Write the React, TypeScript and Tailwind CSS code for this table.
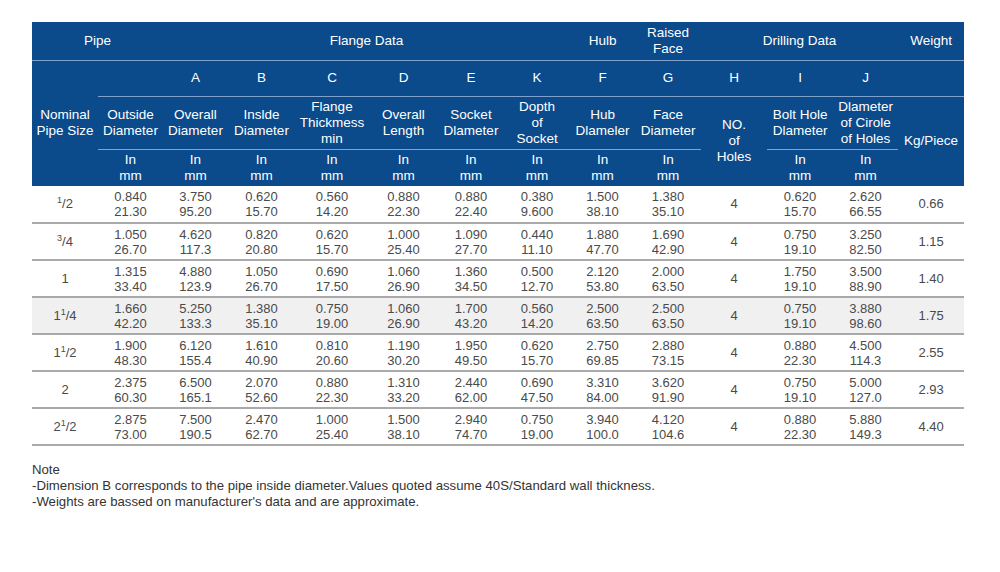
import React from "react";

type Pair = [string, string];

interface FlangeRow {
  whole: string;
  num?: string;
  den?: string;
  cells: Pair[];
  holes: string;
  drill: Pair[];
  weight: string;
  shaded?: boolean;
}

const ROWS: FlangeRow[] = [
  {
    whole: "",
    num: "1",
    den: "2",
    cells: [["0.840", "21.30"], ["3.750", "95.20"], ["0.620", "15.70"], ["0.560", "14.20"], ["0.880", "22.30"], ["0.880", "22.40"], ["0.380", "9.600"], ["1.500", "38.10"], ["1.380", "35.10"]],
    holes: "4",
    drill: [["0.620", "15.70"], ["2.620", "66.55"]],
    weight: "0.66",
  },
  {
    whole: "",
    num: "3",
    den: "4",
    cells: [["1.050", "26.70"], ["4.620", "117.3"], ["0.820", "20.80"], ["0.620", "15.70"], ["1.000", "25.40"], ["1.090", "27.70"], ["0.440", "11.10"], ["1.880", "47.70"], ["1.690", "42.90"]],
    holes: "4",
    drill: [["0.750", "19.10"], ["3.250", "82.50"]],
    weight: "1.15",
  },
  {
    whole: "1",
    cells: [["1.315", "33.40"], ["4.880", "123.9"], ["1.050", "26.70"], ["0.690", "17.50"], ["1.060", "26.90"], ["1.360", "34.50"], ["0.500", "12.70"], ["2.120", "53.80"], ["2.000", "63.50"]],
    holes: "4",
    drill: [["1.750", "19.10"], ["3.500", "88.90"]],
    weight: "1.40",
  },
  {
    whole: "1",
    num: "1",
    den: "4",
    cells: [["1.660", "42.20"], ["5.250", "133.3"], ["1.380", "35.10"], ["0.750", "19.00"], ["1.060", "26.90"], ["1.700", "43.20"], ["0.560", "14.20"], ["2.500", "63.50"], ["2.500", "63.50"]],
    holes: "4",
    drill: [["0.750", "19.10"], ["3.880", "98.60"]],
    weight: "1.75",
    shaded: true,
  },
  {
    whole: "1",
    num: "1",
    den: "2",
    cells: [["1.900", "48.30"], ["6.120", "155.4"], ["1.610", "40.90"], ["0.810", "20.60"], ["1.190", "30.20"], ["1.950", "49.50"], ["0.620", "15.70"], ["2.750", "69.85"], ["2.880", "73.15"]],
    holes: "4",
    drill: [["0.880", "22.30"], ["4.500", "114.3"]],
    weight: "2.55",
  },
  {
    whole: "2",
    cells: [["2.375", "60.30"], ["6.500", "165.1"], ["2.070", "52.60"], ["0.880", "22.30"], ["1.310", "33.20"], ["2.440", "62.00"], ["0.690", "47.50"], ["3.310", "84.00"], ["3.620", "91.90"]],
    holes: "4",
    drill: [["0.750", "19.10"], ["5.000", "127.0"]],
    weight: "2.93",
  },
  {
    whole: "2",
    num: "1",
    den: "2",
    cells: [["2.875", "73.00"], ["7.500", "190.5"], ["2.470", "62.70"], ["1.000", "25.40"], ["1.500", "38.10"], ["2.940", "74.70"], ["0.750", "19.00"], ["3.940", "100.0"], ["4.120", "104.6"]],
    holes: "4",
    drill: [["0.880", "22.30"], ["5.880", "149.3"]],
    weight: "4.40",
  },
];

const WIDTHS = [66, 65, 65, 67, 74, 69, 66, 66, 65, 66, 66, 66, 65, 66];

const line = "border-b border-[#7fa2cd]";

function PairCell({ pair }: { pair: Pair }) {
  return (
    <td className="p-0 text-center align-middle leading-[15px]">
      <div>{pair[0]}</div>
      <div>{pair[1]}</div>
    </td>
  );
}

function Units() {
  return (
    <td className="p-0 text-center align-middle leading-[16px]">
      <div>In</div>
      <div>mm</div>
    </td>
  );
}

function Size({ row }: { row: FlangeRow }) {
  return (
    <span>
      {row.whole}
      {row.num && (
        <>
          <sup className="text-[9px] relative -top-[5px]">{row.num}</sup>/{row.den}
        </>
      )}
    </span>
  );
}

export default function App() {
  const head = "p-0 text-center align-middle font-normal";
  return (
    <div
      className="min-h-[572px] w-[1000px] bg-white pl-[32px] pt-[22px]"
      style={{ fontFamily: '"Liberation Sans", Arial, sans-serif' }}
    >
      <table className="table-fixed border-collapse w-[932px] text-[13px]">
        <colgroup>
          {WIDTHS.map((w, i) => (
            <col key={i} style={{ width: w }} />
          ))}
        </colgroup>
        <thead className="bg-[#0b4a8b] text-white text-[13.5px]">
          <tr className="h-[38px]">
            <th colSpan={2} className={`${head} ${line}`}>Pipe</th>
            <th colSpan={6} className={`${head} ${line}`}>Flange Data</th>
            <th className={`${head} ${line}`}>Hulb</th>
            <th className={`${head} ${line} leading-[16px]`}>
              Raised
              <br />
              Face
            </th>
            <th colSpan={3} className={`${head} ${line}`}>Drilling Data</th>
            <th className={`${head} ${line}`}>Weight</th>
          </tr>
          <tr className="h-[36px]">
            <th rowSpan={3} className={`${head} leading-[16px]`}>
              Nominal
              <br />
              Pipe Size
            </th>
            <th className={`${head} ${line}`}></th>
            {["A", "B", "C", "D", "E", "K", "F", "G", "H", "I", "J"].map((l) => (
              <th key={l} className={`${head} ${line}`}>{l}</th>
            ))}
            <th className={`${head} ${line}`}></th>
          </tr>
          <tr className="h-[53px] leading-[16px]">
            <th className={`${head} ${line}`}>Outside<br />Diameter</th>
            <th className={`${head} ${line}`}>Overall<br />Diameter</th>
            <th className={`${head} ${line}`}>Inslde<br />Diameter</th>
            <th className={`${head} ${line}`}>Flange<br />Thickmess<br />min</th>
            <th className={`${head} ${line}`}>Overall<br />Length</th>
            <th className={`${head} ${line}`}>Socket<br />Dlameter</th>
            <th className={`${head} ${line}`}>Dopth<br />of<br />Socket</th>
            <th className={`${head} ${line}`}>Hub<br />Dlameler</th>
            <th className={`${head} ${line}`}>Face<br />Diameter</th>
            <th rowSpan={2} className={`${head}`}>NO.<br />of<br />Holes</th>
            <th className={`${head} ${line}`}>Bolt Hole<br />Dlameter</th>
            <th className={`${head} ${line}`}>Dlameter<br />of Cirole<br />of Holes</th>
            <th rowSpan={2} className={`${head}`}>Kg/Piece</th>
          </tr>
          <tr className="h-[37px]">
            {Array.from({ length: 11 }).map((_, i) => (
              <Units key={i} />
            ))}
          </tr>
        </thead>
        <tbody className="text-[#4a4a4a]">
          {ROWS.map((row, i) => (
            <tr
              key={i}
              className={`h-[37px] border-b-2 border-[#a9a9a9] ${row.shaded ? "bg-[#f0f0f0]" : "bg-white"}`}
            >
              <td className="p-0 text-center align-middle">
                <Size row={row} />
              </td>
              {row.cells.map((c, j) => (
                <PairCell key={j} pair={c} />
              ))}
              <td className="p-0 text-center align-middle">{row.holes}</td>
              {row.drill.map((c, j) => (
                <PairCell key={j} pair={c} />
              ))}
              <td className="p-0 text-center align-middle">{row.weight}</td>
            </tr>
          ))}
        </tbody>
      </table>

      <div className="mt-[16px] text-[13.2px] leading-[16px] text-[#333]">
        <p>Note</p>
        <p>-Dimension B corresponds to the pipe inside diameter.Values quoted assume 40S/Standard wall thickness.</p>
        <p>-Weights are bassed on manufacturer's data and are approximate.</p>
      </div>
    </div>
  );
}
